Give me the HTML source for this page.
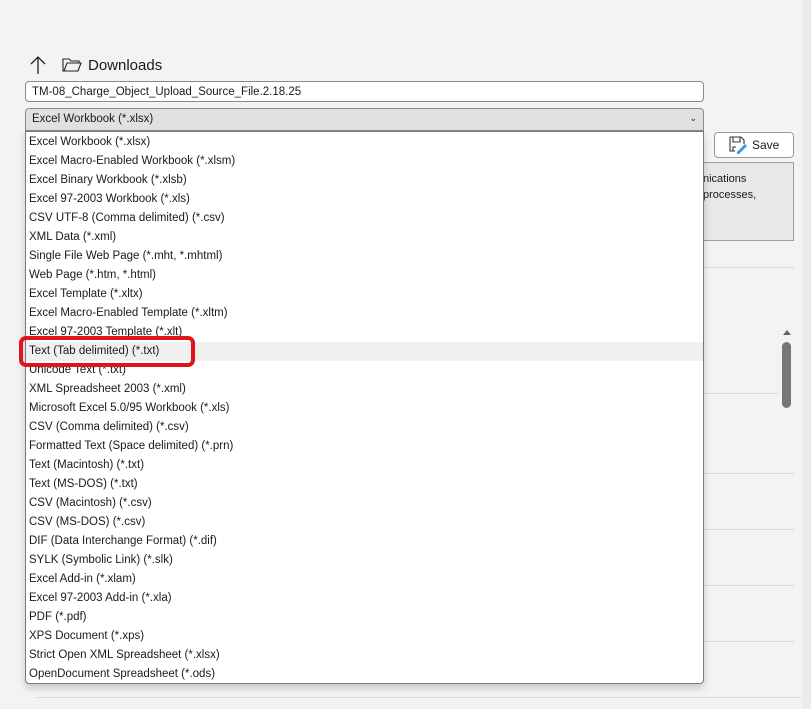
<!DOCTYPE html>
<html><head><style>
body{margin:0;width:811px;height:709px;background:#f3f3f3;font-family:"Liberation Sans",sans-serif;position:relative;overflow:hidden;color:#1a1a1a}
.a{position:absolute}
.list{left:25px;top:131px;width:677px;height:551px;background:#fff;border:1px solid #7a7a7a;border-radius:0 0 4px 4px;box-shadow:0 4px 8px rgba(0,0,0,.18);box-sizing:content-box}
.in{padding-top:1px}
.it{height:19px;line-height:19px;padding-left:3px;font-size:11.5px;white-space:nowrap}
.hl{background:#f0f0f0}
.ln{height:1px;background:#d9d9d9}
</style></head><body>
<div class="a" style="right:0;top:0;width:9px;height:709px;background:#ebebeb"></div>
<svg class="a" style="left:29px;top:55px" width="18" height="20"><path d="M9 19V2M2 9L9 2L16 9" fill="none" stroke="#222" stroke-width="1.3"/></svg>
<svg class="a" style="left:62px;top:57px" width="20" height="16"><path d="M1 2h6l2 2h8v2H5L2 14H1z M2 14L5 6h14l-3 8z" fill="none" stroke="#222" stroke-width="1.1"/></svg>
<div class="a" style="left:88px;top:57px;font-size:15px">Downloads</div>
<div class="a" style="left:25px;top:81px;height:21px;background:#fff;border:1px solid #8a8a8a;border-radius:4px;font-size:11.5px;line-height:21px;padding-left:6px;box-sizing:border-box;width:679px">TM-08_Charge_Object_Upload_Source_File.2.18.25</div>
<div class="a" style="left:25px;top:108px;width:679px;height:23px;box-sizing:border-box;background:#e1e1e1;border:1px solid #8a8a8a;border-radius:4px 4px 0 0;font-size:11.5px;line-height:21px;padding-left:6px">Excel Workbook (*.xlsx)<span style="position:absolute;right:6px;top:-1px;font-size:9px">&#8964;</span></div>
<div class="a" style="left:714px;top:132px;width:80px;height:26px;box-sizing:border-box;background:#fff;border:1px solid #9a9a9a;border-radius:4px;font-size:12px;line-height:24px"><svg style="position:absolute;left:14px;top:3px" width="18" height="18"><path d="M1 1h11l3 3v4M1 1v14h5M4 1v5h7V1M4 15v-4h3" fill="none" stroke="#333" stroke-width="1.1"/><path d="M8 16l8-8 2 2-8 8H8z" fill="#3b9ad9"/></svg><span style="position:absolute;left:37px">Save</span></div>
<div class="a" style="left:703px;top:162px;width:91px;height:79px;box-sizing:border-box;background:#e8e8e8;border:1px solid #a0a0a0;border-left:none;font-size:11px;line-height:16px;padding-top:8px">nications<br>processes,</div>
<div class="a ln" style="left:703px;top:267px;width:91px"></div>
<div class="a ln" style="left:703px;top:393px;width:75px"></div>
<div class="a ln" style="left:703px;top:473px;width:91px"></div>
<div class="a ln" style="left:703px;top:529px;width:91px"></div>
<div class="a ln" style="left:703px;top:585px;width:91px"></div>
<div class="a ln" style="left:703px;top:641px;width:91px"></div>
<div class="a ln" style="left:36px;top:697px;width:765px"></div>
<div class="a" style="left:782px;top:342px;width:9px;height:66px;background:#777;border-radius:5px"></div>
<div class="a" style="left:783px;top:330px;width:0;height:0;border-left:4px solid transparent;border-right:4px solid transparent;border-bottom:5px solid #666"></div>
<div class="a list"><div class="in">
<div class="it">Excel Workbook (*.xlsx)</div>
<div class="it">Excel Macro-Enabled Workbook (*.xlsm)</div>
<div class="it">Excel Binary Workbook (*.xlsb)</div>
<div class="it">Excel 97-2003 Workbook (*.xls)</div>
<div class="it">CSV UTF-8 (Comma delimited) (*.csv)</div>
<div class="it">XML Data (*.xml)</div>
<div class="it">Single File Web Page (*.mht, *.mhtml)</div>
<div class="it">Web Page (*.htm, *.html)</div>
<div class="it">Excel Template (*.xltx)</div>
<div class="it">Excel Macro-Enabled Template (*.xltm)</div>
<div class="it">Excel 97-2003 Template (*.xlt)</div>
<div class="it hl">Text (Tab delimited) (*.txt)</div>
<div class="it">Unicode Text (*.txt)</div>
<div class="it">XML Spreadsheet 2003 (*.xml)</div>
<div class="it">Microsoft Excel 5.0/95 Workbook (*.xls)</div>
<div class="it">CSV (Comma delimited) (*.csv)</div>
<div class="it">Formatted Text (Space delimited) (*.prn)</div>
<div class="it">Text (Macintosh) (*.txt)</div>
<div class="it">Text (MS-DOS) (*.txt)</div>
<div class="it">CSV (Macintosh) (*.csv)</div>
<div class="it">CSV (MS-DOS) (*.csv)</div>
<div class="it">DIF (Data Interchange Format) (*.dif)</div>
<div class="it">SYLK (Symbolic Link) (*.slk)</div>
<div class="it">Excel Add-in (*.xlam)</div>
<div class="it">Excel 97-2003 Add-in (*.xla)</div>
<div class="it">PDF (*.pdf)</div>
<div class="it">XPS Document (*.xps)</div>
<div class="it">Strict Open XML Spreadsheet (*.xlsx)</div>
<div class="it">OpenDocument Spreadsheet (*.ods)</div>
</div></div>
<div class="a" style="left:19px;top:336px;width:176px;height:31px;box-sizing:border-box;border:4px solid #e0141b;border-radius:7px"></div>
</body></html>
